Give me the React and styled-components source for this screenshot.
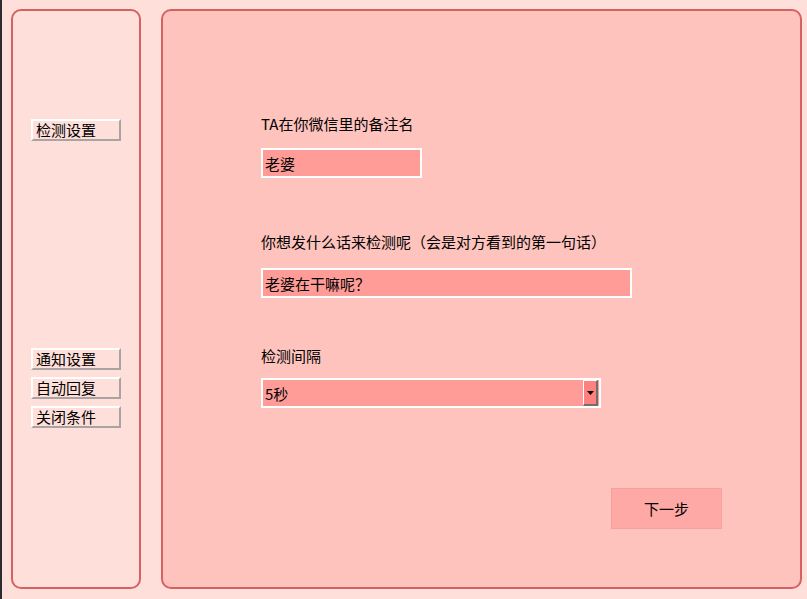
import { useState } from 'react';
import styled, { createGlobalStyle } from 'styled-components';

const GlobalStyle = createGlobalStyle`
  html, body {
    margin: 0;
    padding: 0;
    background: #ffdfd9;
  }
  body {
    font-family: "Noto Sans CJK SC", "DejaVu Sans", sans-serif;
    font-size: 15px;
    color: #000;
  }
`;

const Page = styled.div`
  display: flex;
  gap: 20px;
  height: 599px;
  box-sizing: border-box;
  padding: 9px 5px 10px 9px;
  border-left: 2px solid #2d2d30;
`;

const SidePanel = styled.div`
  width: 130px;
  box-sizing: border-box;
  border: 2px solid #d66062;
  border-radius: 10px;
  background: #ffdfd9;
  display: flex;
  flex-direction: column;
  align-items: flex-start;
  padding: 108px 0 0 18px;
`;

const SideGroup = styled.div`
  display: flex;
  flex-direction: column;
  gap: 7px;
  margin-top: ${(p) => p.$top || 0}px;
`;

const SideButton = styled.button`
  width: 90px;
  height: 22px;
  box-sizing: border-box;
  padding: 0 0 0 3px;
  margin: 0;
  text-align: left;
  font-family: inherit;
  font-size: 15px;
  line-height: 18px;
  color: #000;
  background: #ffdfd9;
  border-top: 2px solid #fff;
  border-left: 2px solid #fff;
  border-right: 2px solid #a9a4a3;
  border-bottom: 2px solid #a9a4a3;
  border-radius: 0;
  cursor: pointer;
`;

const MainPanel = styled.div`
  flex: 1;
  box-sizing: border-box;
  border: 2px solid #d66062;
  border-radius: 10px;
  background: #ffc3bd;
  padding: 103px 0 0 98px;
  display: flex;
  flex-direction: column;
  align-items: flex-start;
`;

const Label = styled.div`
  line-height: 20px;
  height: 20px;
  margin-top: ${(p) => p.$top || 0}px;
  white-space: nowrap;
`;

const TextField = styled.input`
  width: ${(p) => p.$w}px;
  height: 30px;
  box-sizing: border-box;
  margin: ${(p) => p.$gap}px 0 0 0;
  padding: 0 2px;
  border: 2px solid #fff;
  background: #ff9c98;
  font-family: inherit;
  font-size: 15px;
  color: #000;
  outline: none;
`;

const SelectBox = styled.div`
  width: 340px;
  height: 30px;
  box-sizing: border-box;
  margin-top: 12px;
  border: 2px solid #fff;
  background: #ff9c98;
  display: flex;
  align-items: center;
  justify-content: space-between;
  padding: 0 0 0 2px;
`;

const DropButton = styled.div`
  width: 15px;
  height: 26px;
  box-sizing: border-box;
  margin-right: 1px;
  background: #ff807c;
  border-top: 1px solid #fff;
  border-left: 1px solid #fff;
  border-right: 2px solid #6f6f6f;
  border-bottom: 2px solid #6f6f6f;
  display: flex;
  align-items: center;
  justify-content: center;
`;

const NextButton = styled.button`
  margin: 80px 0 0 350px;
  width: 111px;
  height: 41px;
  box-sizing: border-box;
  border: 1px solid #f7a09e;
  background: #ffa9a6;
  font-family: inherit;
  font-size: 15px;
  color: #000;
  cursor: pointer;
  padding: 0;
`;

export default function App() {
  const [name, setName] = useState('老婆');
  const [message, setMessage] = useState('老婆在干嘛呢？');

  return (
    <>
      <GlobalStyle />
      <Page>
        <SidePanel>
          <SideGroup>
            <SideButton>检测设置</SideButton>
          </SideGroup>
          <SideGroup $top={207}>
            <SideButton>通知设置</SideButton>
            <SideButton>自动回复</SideButton>
            <SideButton>关闭条件</SideButton>
          </SideGroup>
        </SidePanel>
        <MainPanel>
          <Label>TA在你微信里的备注名</Label>
          <TextField $w={161} $gap={14} value={name} onChange={(e) => setName(e.target.value)} />
          <Label $top={54}>你想发什么话来检测呢（会是对方看到的第一句话）</Label>
          <TextField $w={371} $gap={16} value={message} onChange={(e) => setMessage(e.target.value)} />
          <Label $top={48}>检测间隔</Label>
          <SelectBox>
            <span>5秒</span>
            <DropButton>
              <svg width="7" height="4" viewBox="0 0 7 4">
                <path d="M0 0h7L3.5 4z" fill="#000" />
              </svg>
            </DropButton>
          </SelectBox>
          <NextButton>下一步</NextButton>
        </MainPanel>
      </Page>
    </>
  );
}
